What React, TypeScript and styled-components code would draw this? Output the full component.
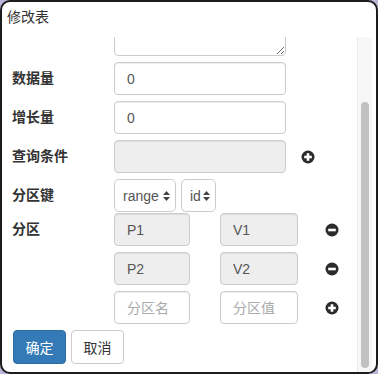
import React, { useLayoutEffect, useRef } from 'react';
import styled, { createGlobalStyle } from 'styled-components';

const GlobalStyle = createGlobalStyle`
  html, body {
    margin: 0;
    padding: 0;
    background: #bcb6d8;
  }
  body {
    font-family: "Liberation Sans", "Noto Sans CJK SC", sans-serif;
    font-size: 14px;
    color: #333;
  }
  * {
    box-sizing: border-box;
  }
`;

const Frame = styled.div`
  width: 378px;
  height: 374px;
  border: 2px solid #1c1c1c;
  border-radius: 10px;
  background: #fff;
  overflow: hidden;
  display: flex;
  flex-direction: column;
`;

const Header = styled.div`
  height: 35px;
  flex: none;
  padding: 6px 0 0 5px;
  font-size: 14px;
  line-height: 18px;
  color: #333;
`;

const Main = styled.div`
  flex: 1;
  min-height: 0;
  display: flex;
  padding-right: 4px;
`;

const Body = styled.div`
  flex: 1;
  min-width: 0;
  overflow: hidden;
  padding: 7px 0 8px 8px;
`;

const ScrollTrack = styled.div`
  width: 15px;
  flex: none;
  display: flex;
  flex-direction: column;
  background: #f7f7f7;
  border-left: 1px solid #ececec;
  padding: 65px 3px 4px 3px;
`;

const ScrollThumb = styled.div`
  flex: 1;
  background: #c1c1c1;
  border-radius: 4px;
`;

const FormRow = styled.div<{ $gap?: number; $align?: string }>`
  display: grid;
  grid-template-columns: 104px 1fr;
  align-items: ${(p) => p.$align || 'center'};
  margin-bottom: ${(p) => (p.$gap === undefined ? 6 : p.$gap)}px;
`;

const Label = styled.label`
  font-weight: bold;
  font-size: 14px;
  color: #333;
  padding-left: 2px;
  line-height: 33px;
`;

const Controls = styled.div`
  display: flex;
  align-items: center;
`;

const Stack = styled.div`
  display: flex;
  flex-direction: column;
  gap: 6px;
`;

const Input = styled.input<{ $width?: number }>`
  width: ${(p) => p.$width || 172}px;
  height: 33px;
  border: 1px solid #ccc;
  border-radius: 4px;
  padding: 6px 12px;
  font-family: inherit;
  font-size: 14px;
  color: #555;
  background: #fff;
  box-shadow: inset 0 1px 1px rgba(0, 0, 0, 0.075);
  outline: none;

  &:disabled {
    background: #eee;
  }
  &::placeholder {
    color: #aaa;
  }
`;

const TextArea = styled.textarea`
  width: 172px;
  height: 54px;
  border: 1px solid #ccc;
  border-radius: 4px;
  padding: 6px 12px;
  font-family: inherit;
  font-size: 14px;
  resize: vertical;
  box-shadow: inset 0 1px 1px rgba(0, 0, 0, 0.075);
  display: block;
`;

const SelectWrap = styled.div<{ $width: number }>`
  position: relative;
  width: ${(p) => p.$width}px;
  height: 33px;
  margin-right: 5px;
`;

const Select = styled.select`
  appearance: none;
  width: 100%;
  height: 100%;
  border: 1px solid #ccc;
  border-radius: 5px;
  padding: 0 0 0 8px;
  font-family: inherit;
  font-size: 14px;
  color: #555;
  background: #fff;
  outline: none;
`;

const Arrows = styled.svg`
  position: absolute;
  right: 6px;
  top: 12px;
  pointer-events: none;
`;

const Spacer = styled.span<{ $left: number }>`
  display: inline-flex;
  margin-left: ${(p) => p.$left}px;
`;

const ButtonBar = styled.div`
  display: flex;
  gap: 5px;
  padding-left: 3px;
  margin-top: 6px;
`;

const Button = styled.button<{ $primary?: boolean }>`
  width: 53px;
  height: 34px;
  border-radius: 4px;
  font-family: inherit;
  font-size: 14px;
  border: 1px solid ${(p) => (p.$primary ? '#2e6da4' : '#ccc')};
  background: ${(p) => (p.$primary ? '#337ab7' : '#fff')};
  color: ${(p) => (p.$primary ? '#fff' : '#333')};
  padding: 0;
`;

const SignIcon = ({ minus }: { minus?: boolean }) => (
  <svg width="14" height="14" viewBox="0 0 14 14">
    <circle cx="7" cy="7" r="6.5" fill="#2b2b2b" />
    <rect x="3.2" y="5.7" width="7.6" height="2.6" fill="#fff" />
    {!minus && <rect x="5.7" y="3.2" width="2.6" height="7.6" fill="#fff" />}
  </svg>
);

const SelectArrows = () => (
  <Arrows width="7" height="10" viewBox="0 0 7 10">
    <path d="M3.5 0 L7 4 L0 4 Z" fill="#444" />
    <path d="M3.5 10 L7 6 L0 6 Z" fill="#444" />
  </Arrows>
);

const partitions = [
  { name: 'P1', value: 'V1' },
  { name: 'P2', value: 'V2' },
];

export default function App() {
  const bodyRef = useRef<HTMLDivElement>(null);

  useLayoutEffect(() => {
    if (bodyRef.current) bodyRef.current.scrollTop = bodyRef.current.scrollHeight;
  }, []);

  return (
    <>
      <GlobalStyle />
      <Frame>
        <Header>修改表</Header>
        <Main>
          <Body ref={bodyRef}>
            <FormRow $align="start">
              <span />
              <Controls>
                <TextArea />
              </Controls>
            </FormRow>
            <FormRow>
              <Label>数据量</Label>
              <Controls>
                <Input defaultValue="0" />
              </Controls>
            </FormRow>
            <FormRow>
              <Label>增长量</Label>
              <Controls>
                <Input defaultValue="0" />
              </Controls>
            </FormRow>
            <FormRow>
              <Label>查询条件</Label>
              <Controls>
                <Input disabled />
                <Spacer $left={15}>
                  <SignIcon />
                </Spacer>
              </Controls>
            </FormRow>
            <FormRow $gap={1}>
              <Label>分区键</Label>
              <Controls>
                <SelectWrap $width={62}>
                  <Select defaultValue="range">
                    <option value="range">range</option>
                  </Select>
                  <SelectArrows />
                </SelectWrap>
                <SelectWrap $width={35}>
                  <Select defaultValue="id">
                    <option value="id">id</option>
                  </Select>
                  <SelectArrows />
                </SelectWrap>
              </Controls>
            </FormRow>
            <FormRow $align="start">
              <Label>分区</Label>
              <Stack>
                {partitions.map((p) => (
                  <Controls key={p.name}>
                    <Input $width={76} disabled defaultValue={p.name} />
                    <Spacer $left={30}>
                      <Input $width={78} disabled defaultValue={p.value} />
                    </Spacer>
                    <Spacer $left={27}>
                      <SignIcon minus />
                    </Spacer>
                  </Controls>
                ))}
                <Controls>
                  <Input $width={76} placeholder="分区名" />
                  <Spacer $left={30}>
                    <Input $width={78} placeholder="分区值" />
                  </Spacer>
                  <Spacer $left={27}>
                    <SignIcon />
                  </Spacer>
                </Controls>
              </Stack>
            </FormRow>
            <ButtonBar>
              <Button $primary>确定</Button>
              <Button>取消</Button>
            </ButtonBar>
          </Body>
          <ScrollTrack>
            <ScrollThumb />
          </ScrollTrack>
        </Main>
      </Frame>
    </>
  );
}
